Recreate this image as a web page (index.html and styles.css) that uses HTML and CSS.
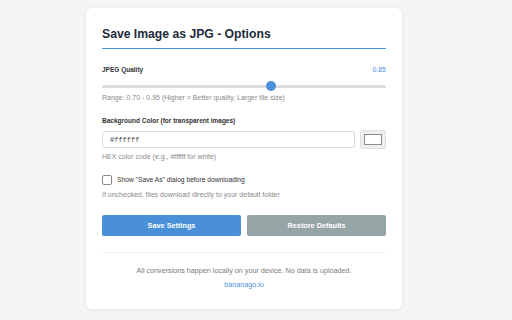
FILE: index.html
```html
<!DOCTYPE html>
<html>
<head>
<meta charset="utf-8">
<link rel="stylesheet" href="styles.css">
</head>
<body>
<div class="card">
  <h1 class="title">Save Image as JPG - Options</h1>

  <div class="label-row first">
    <span class="label">JPEG Quality</span>
    <span class="value">0.85</span>
  </div>
  <input class="slider" type="range" min="0.70" max="0.95" step="0.05" value="0.85">
  <div class="hint hint-range">Range: 0.70 - 0.95 (Higher = Better quality, Larger file size)</div>

  <div class="label section">Background Color (for transparent images)</div>
  <div class="color-row">
    <input class="text-input" type="text" value="#ffffff">
    <div class="swatch"><div class="swatch-inner"></div></div>
  </div>
  <div class="hint hint-hex">HEX color code (e.g., #ffffff for white)</div>

  <label class="check-row">
    <span class="checkbox"></span>
    <span class="check-label">Show "Save As" dialog before downloading</span>
  </label>
  <div class="hint hint-check">If unchecked, files download directly to your default folder</div>

  <div class="buttons">
    <button class="btn btn-save">Save Settings</button>
    <button class="btn btn-restore">Restore Defaults</button>
  </div>

  <div class="footer">
    <div class="footer-text">All conversions happen locally on your device. No data is uploaded.</div>
    <a class="footer-link" href="#">bananago.io</a>
  </div>
</div>
</body>
</html>
```

FILE: styles.css
```css
html, body {
  margin: 0;
  padding: 0;
}
body {
  background: #f5f5f5;
  font-family: "Liberation Sans", Arial, sans-serif;
  width: 512px;
  height: 320px;
  overflow: hidden;
}
.card {
  box-sizing: border-box;
  margin: 8px 0 0 86px;
  width: 316px;
  padding: 19px 16px 20px;
  background: #fff;
  border-radius: 6px;
  box-shadow: 0 1px 4px rgba(0, 0, 0, 0.08);
  display: flex;
  flex-direction: column;
}
.title {
  margin: 0;
  font-size: 12.2px;
  line-height: 14px;
  font-weight: 700;
  color: #1c2a3b;
  padding-bottom: 7px;
  border-bottom: 1px solid #4a90d9;
}
.label-row {
  display: flex;
  justify-content: space-between;
  align-items: center;
}
.first {
  margin-top: 17px;
}
.label {
  font-size: 6.5px;
  line-height: 8px;
  font-weight: 700;
  color: #333;
}
.value {
  font-size: 7px;
  line-height: 8px;
  color: #4a90d9;
}
.slider {
  -webkit-appearance: none;
  appearance: none;
  margin: 7px 0 0;
  padding: 0;
  width: 284px;
  height: 10px;
  background: transparent;
}
.slider::-webkit-slider-runnable-track {
  height: 3px;
  background: #dedede;
  border-radius: 2px;
}
.slider::-webkit-slider-thumb {
  -webkit-appearance: none;
  width: 10px;
  height: 10px;
  border-radius: 50%;
  background: #4a90d9;
  margin-top: -3.5px;
  border: none;
}
.hint {
  font-size: 7px;
  line-height: 8px;
  color: #8a8a8a;
}
.hint-range {
  margin-top: 3px;
}
.section {
  margin-top: 15px;
}
.color-row {
  display: flex;
  align-items: center;
  gap: 5px;
  margin-top: 5px;
}
.text-input {
  box-sizing: border-box;
  width: 253px;
  height: 17px;
  margin: 0;
  padding: 0 7px;
  border: 1px solid #dcdcdc;
  border-radius: 3px;
  font-family: "Liberation Mono", "DejaVu Sans Mono", monospace;
  font-size: 7px;
  color: #444;
  outline: none;
}
.swatch {
  box-sizing: border-box;
  width: 26px;
  height: 19px;
  padding: 3px 3px;
  background: #efefef;
  border: 1px solid #e0e0e0;
  border-radius: 2px;
  display: flex;
}
.swatch-inner {
  flex: 1;
  background: #fff;
  border: 1px solid #8c8c8c;
}
.hint-hex {
  margin-top: 4px;
}
.check-row {
  display: flex;
  align-items: center;
  gap: 5px;
  margin-top: 14px;
}
.checkbox {
  box-sizing: border-box;
  width: 10px;
  height: 10px;
  border: 1px solid #8a8a8a;
  border-radius: 2px;
  background: #fff;
}
.check-label {
  font-size: 6.7px;
  line-height: 8px;
  color: #333;
}
.hint-check {
  margin-top: 6px;
}
.buttons {
  display: flex;
  gap: 6px;
  margin-top: 16px;
}
.btn {
  flex: 1;
  height: 21px;
  margin: 0;
  padding: 0;
  border: none;
  border-radius: 2px;
  font-family: "Liberation Sans", Arial, sans-serif;
  font-size: 7.3px;
  font-weight: 700;
  color: #fff;
}
.btn-save {
  background: #4a90d9;
}
.btn-restore {
  background: #95a5a6;
}
.footer {
  margin-top: 16px;
  border-top: 1px solid #eeeeee;
  padding-top: 14px;
  display: flex;
  flex-direction: column;
  align-items: center;
  gap: 6px;
}
.footer-text {
  font-size: 7.2px;
  line-height: 8px;
  color: #7a7a7a;
}
.footer-link {
  font-size: 7.2px;
  line-height: 8px;
  color: #4a90d9;
  text-decoration: none;
}
```
